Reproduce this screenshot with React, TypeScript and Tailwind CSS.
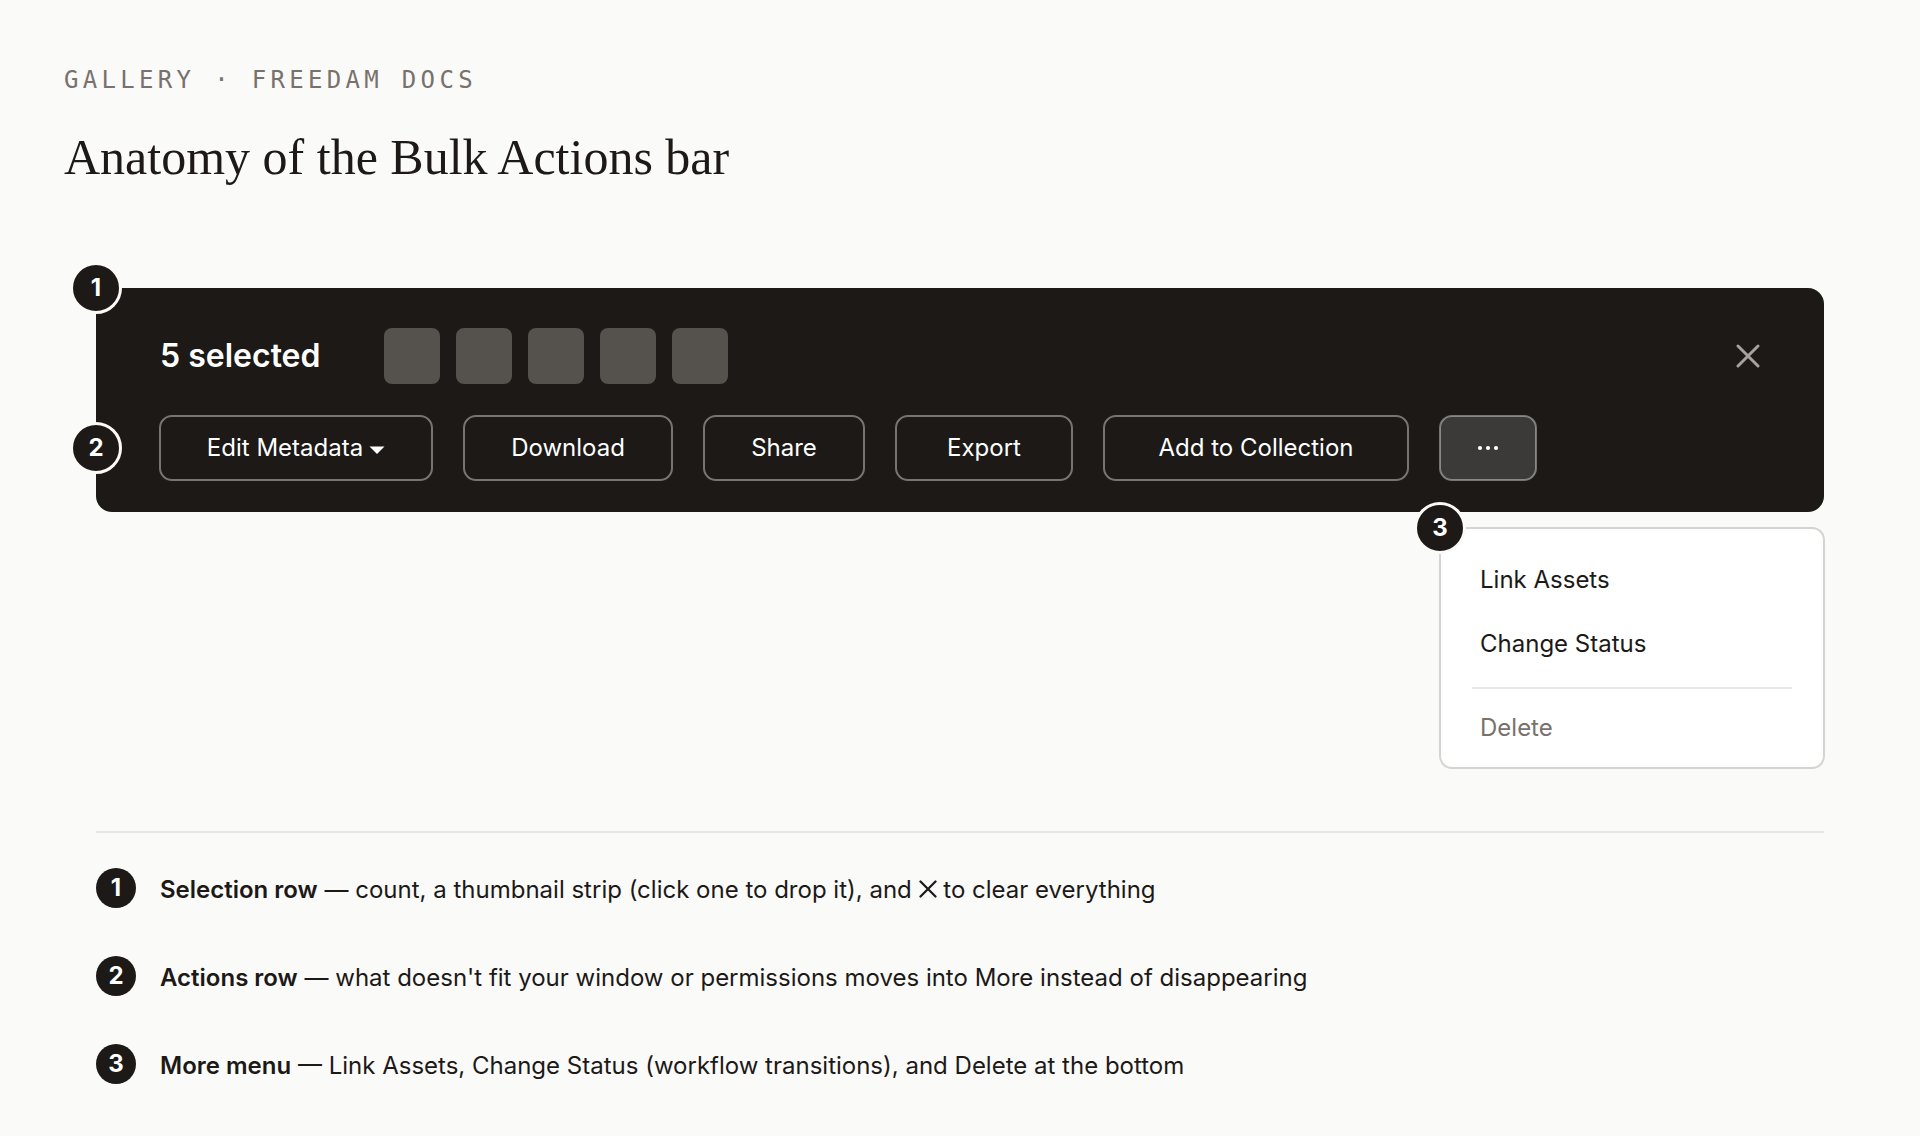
import React, { useState } from 'react';

const INK = 'text-[#1c1917]';

const actions = [
  { label: 'Download', width: 'w-52' },
  { label: 'Share', width: 'w-40' },
  { label: 'Export', width: 'w-44' },
  { label: 'Add to Collection', width: 'w-76' },
];

const Cross: React.FC<{ className: string; strokeWidth: number }> = ({ className, strokeWidth }) => (
  <svg className={className} viewBox="0 0 24 24" fill="none" stroke="currentColor" strokeWidth={strokeWidth} strokeLinecap="round" aria-hidden="true">
    <path d="M2 2l20 20M22 2L2 22" />
  </svg>
);

const legend = [
  {
    title: 'Selection row',
    text: (
      <>
        count, a thumbnail strip (click one to drop it), and{' '}
        <Cross className="inline size-[18px] align-baseline" strokeWidth={3} /> to clear everything
      </>
    ),
  },
  { title: 'Actions row', text: "what doesn't fit your window or permissions moves into More instead of disappearing" },
  { title: 'More menu', text: 'Link Assets, Change Status (workflow transitions), and Delete at the bottom' },
];

const actionClass =
  'h-16 shrink-0 rounded-xl outline-2 -outline-offset-1 outline-white/40 text-2xl text-white flex items-center justify-center';

// Numbered callout, centred on a corner or edge of its parent
const Callout: React.FC<{ n: number; className: string }> = ({ n, className }) => (
  <span
    className={`absolute z-10 size-13 -translate-x-1/2 -translate-y-1/2 rounded-full border-3 border-[#fafaf9] bg-[#1c1917] text-white text-2xl font-bold flex items-center justify-center ${className}`}
  >
    {n}
  </span>
);

export default function App() {
  const [selected, setSelected] = useState([1, 2, 3, 4, 5]);
  const [menuOpen, setMenuOpen] = useState(true);

  return (
    <main className={`min-h-screen bg-[#fafaf9] px-16 pt-16 pb-10 font-['Inter',sans-serif] ${INK}`}>
      <header className="h-56">
        <p className="font-['DejaVu_Sans_Mono',monospace] text-2xl tracking-[0.18em] text-[#78716c]">
          GALLERY · FREEDAM DOCS
        </p>
        <h1 className="mt-5 font-['Liberation_Serif',serif] text-[50px] leading-[82px]">
          Anatomy of the Bulk Actions bar
        </h1>
      </header>

      <div className="px-8">
        <section className="relative rounded-2xl bg-[#1c1917] px-16 pt-10 pb-8">
          <Callout n={1} className="left-0 top-0" />
          <div className="flex h-14 items-center">
            <h2 className="w-56 text-[32px] font-semibold text-white">{selected.length} selected</h2>
            <div className="flex gap-4">
              {selected.map((id) => (
                <button
                  key={id}
                  aria-label={`Remove item ${id}`}
                  onClick={() => setSelected(selected.filter((s) => s !== id))}
                  className="size-14 rounded-lg bg-[#55514d]"
                />
              ))}
            </div>
            <button
              aria-label="Clear selection"
              onClick={() => setSelected([])}
              className="ml-auto text-[#a8a29e]"
            >
              <Cross className="size-6" strokeWidth={3} />
            </button>
          </div>

          <div className="relative mt-8 flex gap-8">
            <button className={`${actionClass} w-68 gap-1.5`}>
              Edit Metadata
              <svg className="mt-1 h-2 w-4" viewBox="0 0 16 8" fill="currentColor" aria-hidden="true">
                <path d="M0.5 0.5h15L8 8z" />
              </svg>
            </button>
            {actions.map((a) => (
              <button key={a.label} className={`${actionClass} ${a.width}`}>
                {a.label}
              </button>
            ))}
            <button
              aria-label="More"
              aria-expanded={menuOpen}
              onClick={() => setMenuOpen(!menuOpen)}
              className={`${actionClass} w-24 bg-[#3b3a38]`}
            >
              <svg className="h-1 w-5 overflow-visible" viewBox="0 0 20 4" fill="currentColor" aria-hidden="true">
                <circle cx="2" cy="2" r="2.1" />
                <circle cx="10" cy="2" r="2.1" />
                <circle cx="18" cy="2" r="2.1" />
              </svg>
            </button>
            <Callout n={2} className="-left-16 top-1/2" />
          </div>
        </section>

        <div className="mt-4 flex h-60 justify-end">
          {menuOpen && (
            <div className="relative w-96 rounded-xl bg-white pt-5 pb-2 outline-2 -outline-offset-1 outline-[#d6d3d1]">
              <Callout n={3} className="left-0 top-0" />
              <button className="block h-16 w-full px-10 text-left text-2xl">Link Assets</button>
              <button className="block h-16 w-full px-10 text-left text-2xl">Change Status</button>
              <hr className="mx-8 mt-[11px] mb-[7px] border-t-2 border-[#e7e7e6]" />
              <button className="block h-16 w-full px-10 text-left text-2xl text-[#78716c]">Delete</button>
            </div>
          )}
        </div>

        <ol className="mt-[63px] flex flex-col gap-11 border-t-2 border-[#e5e5e4] pt-[35px]">
          {legend.map((item, i) => (
            <li key={item.title} className="flex items-start gap-6">
              <span className="flex size-10 shrink-0 items-center justify-center rounded-full bg-[#1c1917] text-2xl font-bold text-white">
                {i + 1}
              </span>
              <p className="text-2xl leading-11">
                <strong className="font-semibold">{item.title}</strong> — {item.text}
              </p>
            </li>
          ))}
        </ol>
      </div>
    </main>
  );
}
